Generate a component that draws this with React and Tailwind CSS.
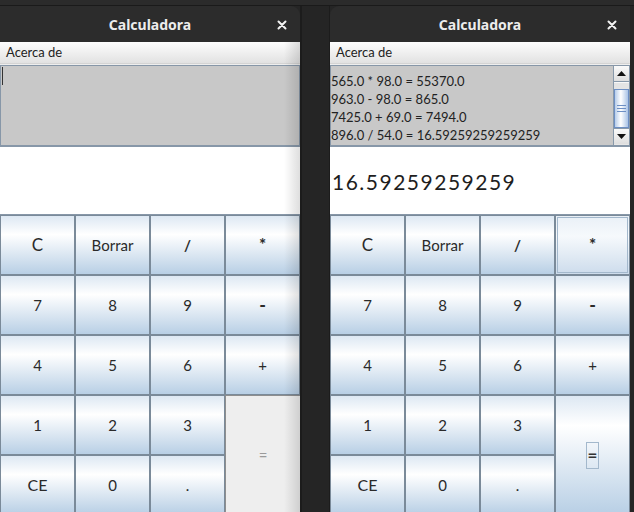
import React from 'react';

const history = [
  '565.0 * 98.0 = 55370.0',
  '963.0 - 98.0 = 865.0',
  '7425.0 + 69.0 = 7494.0',
  '896.0 / 54.0 = 16.59259259259259',
];

const keys = [
  ['C', 'Borrar', '/', '*'],
  ['7', '8', '9', '-'],
  ['4', '5', '6', '+'],
  ['1', '2', '3'],
  ['CE', '0', '.'],
];

const sizes = {
  C: 'text-[17px]',
  CE: 'text-[16px]',
  '-': 'text-[18px] font-bold',
  '*': 'text-[17px] font-bold',
  '/': 'text-[15px] font-bold',
};

function CloseIcon() {
  return (
    <svg width="10" height="10" viewBox="0 0 10 10">
      <path d="M1.5 1.5 L8.5 8.5 M8.5 1.5 L1.5 8.5" stroke="#f2f2f2" strokeWidth="2" strokeLinecap="round" />
    </svg>
  );
}

function Key({ label, focused }) {
  const size = sizes[label] || 'text-[15px]';
  return (
    <div
      className={`h-[60px] border border-[#7a8a99] flex items-center justify-center text-[#2a2a2a] ${size} ${
        focused ? 'bg-[linear-gradient(to_bottom,#e9f0f7,#f6f9fc_35%,#cddcec)] p-[1px]' : 'bg-[linear-gradient(to_bottom,#dde8f3,#ffffff_32%,#b8cfe5)]'
      }`}
    >
      {focused ? (
        <div className="w-full h-full border border-[#a3b8cc] flex items-center justify-center">{label}</div>
      ) : (
        label
      )}
    </div>
  );
}

function Scrollbar() {
  return (
    <div className="w-[16px] flex flex-col border-l border-[#8899aa] bg-[#e6e6e6]">
      <div className="h-[16px] shrink-0 border-b border-[#8899aa] bg-[linear-gradient(to_bottom,#fafafa,#dedede)] flex items-center justify-center">
        <svg width="9" height="5" viewBox="0 0 9 5"><path d="M0 5 L4.5 0 L9 5 Z" fill="#111" /></svg>
      </div>
      <div className="h-[7px] shrink-0 border-t border-[#f8f8f8] bg-[#e4e4e4]" />
      <div className="h-[39px] shrink-0 border border-[#6d8fc4] bg-[linear-gradient(to_right,#b7cdea,#ffffff_45%,#a9c3e6)] flex flex-col items-center justify-center gap-[2px]">
        <div className="w-[9px] h-[1px] bg-[#6d8fc4]" />
        <div className="w-[9px] h-[1px] bg-[#6d8fc4]" />
        <div className="w-[9px] h-[1px] bg-[#6d8fc4]" />
      </div>
      <div className="h-[16px] shrink-0 border-t border-[#8899aa] bg-[linear-gradient(to_bottom,#fafafa,#dedede)] flex items-center justify-center">
        <svg width="9" height="5" viewBox="0 0 9 5"><path d="M0 0 L4.5 5 L9 0 Z" fill="#111" /></svg>
      </div>
    </div>
  );
}

function CalcWindow({ side, filled }) {
  return (
    <div className={`relative w-[300px] h-full flex flex-col overflow-hidden ${side === 'right' ? 'box-content border-l border-[#1c1c1c]' : ''}`}>
      <div
        className={`h-[36px] shrink-0 bg-[#2c2c2c] flex items-center justify-center relative ${
          side === 'left' ? 'rounded-tr-[9px]' : 'rounded-tl-[9px]'
        }`}
      >
        <span className="font-['Noto_Sans',sans-serif] font-bold text-[14px] text-[#ececec] pt-[1px]">Calculadora</span>
        <div className="absolute right-[13px] top-[14px]">
          <CloseIcon />
        </div>
      </div>

      <div className="flex flex-col shrink-0 bg-[#eeeeee] font-['Lato',sans-serif] text-[#333]">
        <div className="h-[22px] shrink-0 border-b border-[#d4d4d4] bg-[linear-gradient(to_bottom,#fdfdfd,#e2e2e2)] flex items-center px-[6px] text-[13px] text-[#222]">
          Acerca de
        </div>

        <div className="mt-[1px] h-[81px] shrink-0 border border-[#8797a8] bg-[#c8c8c8] flex">
          {filled ? (
            <>
              <div className="flex-1 pt-[6px] text-[13px] leading-[18px] text-[#222] overflow-hidden whitespace-nowrap">
                {history.map((h) => (
                  <div key={h}>{h}</div>
                ))}
              </div>
              <Scrollbar />
            </>
          ) : (
            <div className="flex-1 pt-[1px]">
              <div className="ml-[1px] w-[1px] h-[18px] bg-[#333]" />
            </div>
          )}
        </div>

        <div className="h-[69px] shrink-0 border-y border-[#8797a8] bg-white flex items-center pl-[2px] pt-[3px] text-[21px] tracking-[1.5px] text-[#1e1e1e]">
          {filled ? '16.59259259259' : ''}
        </div>

        <div className="grid grid-cols-4 grid-rows-[60px_60px_60px_60px_60px] shrink-0">
          {keys.slice(0, 3).flat().map((k) => (
            <Key key={k} label={k} focused={filled && k === '*'} />
          ))}
          {keys[3].map((k) => (
            <Key key={k} label={k} />
          ))}
          {filled ? (
            <div className="row-span-2 border border-[#7a8a99] bg-[linear-gradient(to_bottom,#dde8f3,#ffffff_25%,#b8cfe5)] flex items-center justify-center">
              <div className="w-[13px] h-[27px] border border-[#a3b8cc] flex items-center justify-center text-[17px] font-bold text-[#333]">=</div>
            </div>
          ) : (
            <div className="row-span-2 border-l border-t border-[#8e8e8e] bg-[#eeeeee] flex items-center justify-center text-[15px] text-[#9a9a9a]">
              =
            </div>
          )}
          {keys[4].map((k) => (
            <Key key={k} label={k} />
          ))}
        </div>
      </div>

      {side === 'left' && (
        <div className="absolute right-0 top-[36px] bottom-0 w-[16px] bg-[linear-gradient(to_right,rgba(0,0,0,0),rgba(0,0,0,0.13))] pointer-events-none" />
      )}
    </div>
  );
}

export default function App() {
  return (
    <div className="w-[634px] h-[512px] bg-[#252525] flex flex-col overflow-hidden">
      <div className="h-[6px] shrink-0 bg-[#2b2b2b] border-b border-[#1a1a1a]" />
      <div className="flex-1 flex min-h-0 overflow-hidden">
        <CalcWindow side="left" filled={false} />
        <div className="w-[29px] shrink-0 border-l-2 border-[#1c1c1c]" />
        <CalcWindow side="right" filled />
      </div>
    </div>
  );
}
